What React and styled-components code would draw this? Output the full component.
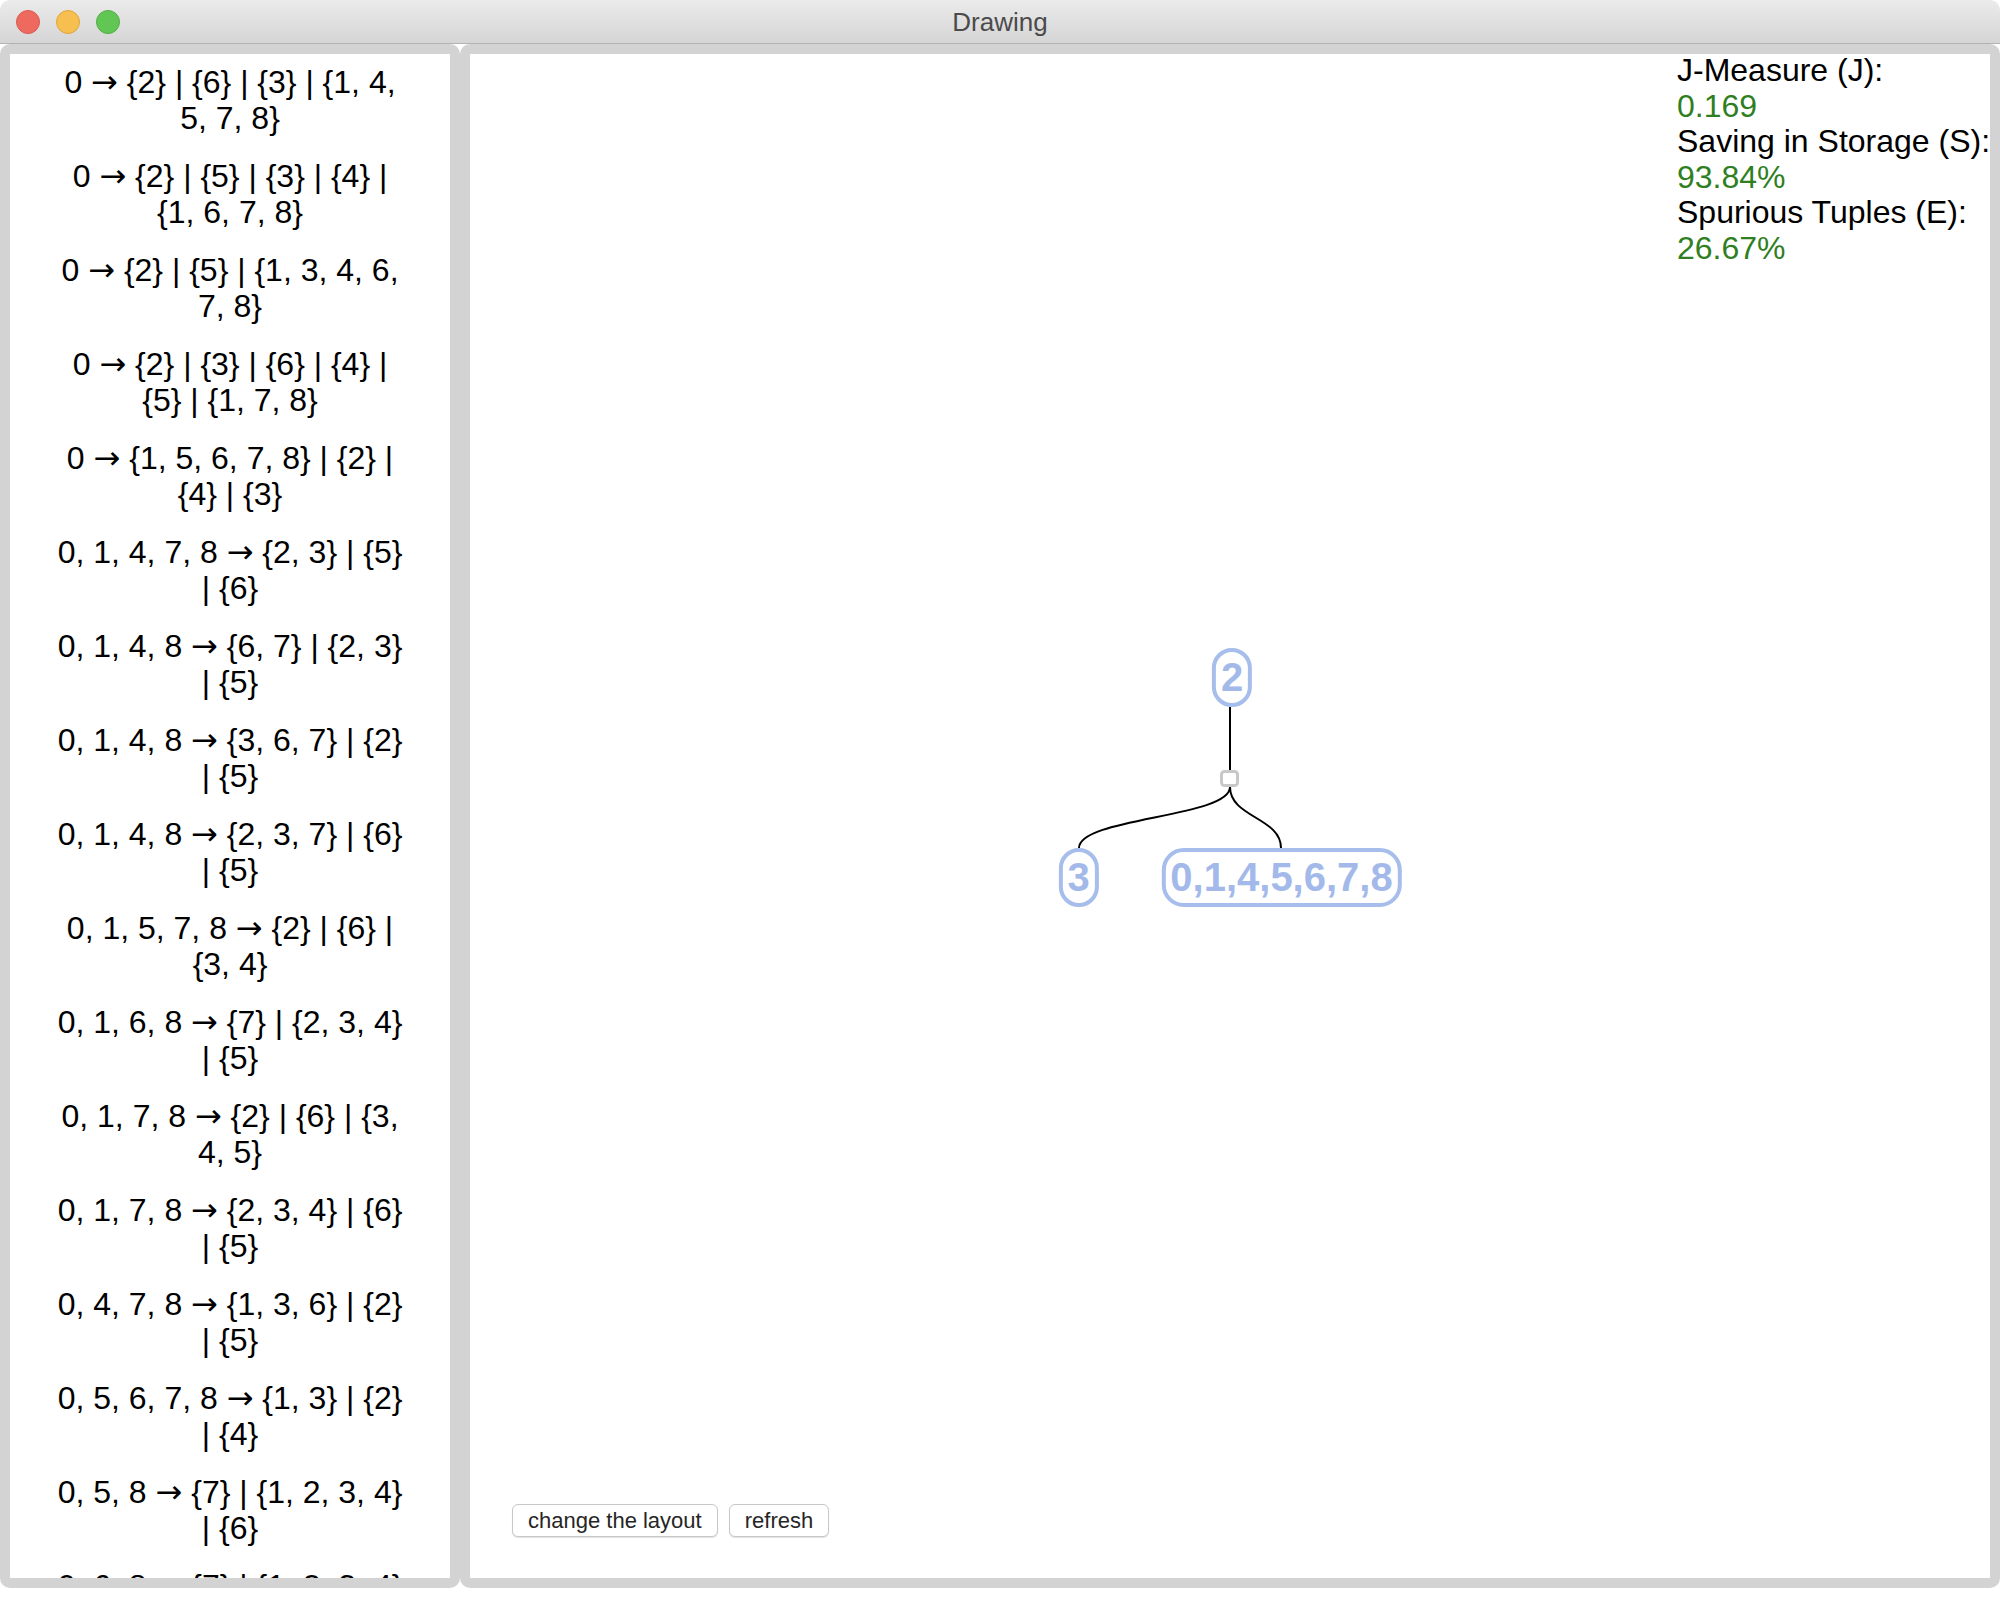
import React from "react";
import styled, { createGlobalStyle } from "styled-components";

const GlobalStyle = createGlobalStyle`
  html, body {
    margin: 0;
    padding: 0;
    background: #ffffff;
  }
  body {
    font-family: "Liberation Sans", Arial, Helvetica, sans-serif;
  }
  * { box-sizing: border-box; }
`;

const Window = styled.div`
  width: 2000px;
  height: 1600px;
  display: flex;
  flex-direction: column;
  background: #ffffff;
`;

const TitleBar = styled.div`
  height: 44px;
  flex: none;
  position: relative;
  display: flex;
  align-items: center;
  justify-content: center;
  background: linear-gradient(#ebebeb, #d5d5d5);
  border-bottom: 1px solid #b3b3b3;
  border-radius: 10px 10px 0 0;
`;

const Lights = styled.div`
  position: absolute;
  left: 16px;
  top: 10px;
  display: flex;
  gap: 16px;
`;

const Light = styled.span`
  width: 24px;
  height: 24px;
  border-radius: 50%;
  background: ${(p) => p.$bg};
  border: 1px solid ${(p) => p.$edge};
`;

const Title = styled.div`
  font-size: 26px;
  color: #4b4b4b;
  line-height: 1;
  margin-top: 1px;
`;

const Main = styled.div`
  height: 1544px;
  flex: none;
  display: flex;
`;

const Panel = styled.div`
  border: 10px solid #d3d3d3;
  border-radius: 10px;
  background: #ffffff;
  overflow: hidden;
  position: relative;
`;

const ListPanel = styled(Panel)`
  width: 460px;
  flex: none;
`;

const RuleList = styled.div`
  height: 100%;
  overflow: hidden;
  padding-top: 10px;
  display: flex;
  flex-direction: column;
  align-items: center;
  gap: 22px;
`;

const Rule = styled.div`
  width: 352px;
  flex: none;
  text-align: center;
  font-size: 32px;
  line-height: 36px;
  color: #000;
`;

const Arrow = styled.span`
  font-family: "DejaVu Sans", sans-serif;
  font-size: 32px;
  line-height: 1;
`;

const DrawPanel = styled(Panel)`
  flex: 1;
  display: flex;
  flex-direction: column;
`;

const Canvas = styled.div`
  flex: 1;
  position: relative;
`;

const Stats = styled.div`
  position: absolute;
  left: 1207px;
  top: -1px;
  font-size: 32px;
  line-height: 35.6px;
  white-space: nowrap;
`;

const StatLabel = styled.div`
  color: #000;
`;

const StatValue = styled.div`
  color: #2f7f22;
`;

const Edges = styled.svg`
  position: absolute;
  left: 0;
  top: 0;
  width: 100%;
  height: 100%;
  overflow: visible;
`;

const Node = styled.div`
  position: absolute;
  transform: translateX(-50%);
  height: 59px;
  padding: 0 5px;
  border: 4px solid #a7bdec;
  border-radius: 22px;
  background: #ffffff;
  color: #a3b9ea;
  font-weight: 700;
  font-size: 40px;
  line-height: 51px;
  white-space: nowrap;
`;

const Toolbar = styled.div`
  flex: none;
  display: flex;
  gap: 11px;
  padding: 0 0 41px 42px;
`;

const Button = styled.button`
  height: 33px;
  padding: 0 15px;
  background: #ffffff;
  border: 1px solid #c8c8c8;
  border-radius: 6px;
  box-shadow: 0 1px 1px rgba(0, 0, 0, 0.12);
  font-family: "Liberation Sans", Arial, sans-serif;
  font-size: 22px;
  color: #262626;
  line-height: 1;
`;

const rules = [
  ["0", "{2} | {6} | {3} | {1, 4, 5, 7, 8}"],
  ["0", "{2} | {5} | {3} | {4} | {1, 6, 7, 8}"],
  ["0", "{2} | {5} | {1, 3, 4, 6, 7, 8}"],
  ["0", "{2} | {3} | {6} | {4} | {5} | {1, 7, 8}"],
  ["0", "{1, 5, 6, 7, 8} | {2} | {4} | {3}"],
  ["0, 1, 4, 7, 8", "{2, 3} | {5} | {6}"],
  ["0, 1, 4, 8", "{6, 7} | {2, 3} | {5}"],
  ["0, 1, 4, 8", "{3, 6, 7} | {2} | {5}"],
  ["0, 1, 4, 8", "{2, 3, 7} | {6} | {5}"],
  ["0, 1, 5, 7, 8", "{2} | {6} | {3, 4}"],
  ["0, 1, 6, 8", "{7} | {2, 3, 4} | {5}"],
  ["0, 1, 7, 8", "{2} | {6} | {3, 4, 5}"],
  ["0, 1, 7, 8", "{2, 3, 4} | {6} | {5}"],
  ["0, 4, 7, 8", "{1, 3, 6} | {2} | {5}"],
  ["0, 5, 6, 7, 8", "{1, 3} | {2} | {4}"],
  ["0, 5, 8", "{7} | {1, 2, 3, 4} | {6}"],
  ["0, 6, 8", "{7} | {1, 2, 3, 4} | {5}"],
];

const stats = [
  ["J-Measure (J):", "0.169"],
  ["Saving in Storage (S):", "93.84%"],
  ["Spurious Tuples (E):", "26.67%"],
];

const nodes = [
  { label: "2", x: 762, y: 594 },
  { label: "3", x: 608.5, y: 794 },
  { label: "0,1,4,5,6,7,8", x: 811.5, y: 794 },
];

export default function App() {
  return (
    <>
      <GlobalStyle />
      <Window>
        <TitleBar>
          <Lights>
            <Light $bg="#ee6a5f" $edge="#d95a4f" />
            <Light $bg="#f6bf4f" $edge="#dea63c" />
            <Light $bg="#62c655" $edge="#4fae43" />
          </Lights>
          <Title>Drawing</Title>
        </TitleBar>
        <Main>
          <ListPanel>
            <RuleList>
              {rules.map(([lhs, rhs], i) => (
                <Rule key={i}>
                  {lhs} <Arrow>→</Arrow> {rhs}
                </Rule>
              ))}
            </RuleList>
          </ListPanel>
          <DrawPanel>
            <Canvas>
              <Edges>
                <path d="M760 653 L760 716" stroke="#000" strokeWidth="2" fill="none" />
                <path d="M760 733 C760 763.5 609 763.5 609 794" stroke="#000" strokeWidth="2" fill="none" />
                <path d="M760 733 C760 763.5 811 763.5 811 794" stroke="#000" strokeWidth="2" fill="none" />
                <rect x="751.5" y="717.5" width="16" height="14" rx="3" fill="#fff" stroke="#c8c8c8" strokeWidth="3" />
              </Edges>
              {nodes.map((n) => (
                <Node key={n.label} style={{ left: n.x, top: n.y }}>
                  {n.label}
                </Node>
              ))}
              <Stats>
                {stats.map(([l, v]) => (
                  <React.Fragment key={l}>
                    <StatLabel>{l}</StatLabel>
                    <StatValue>{v}</StatValue>
                  </React.Fragment>
                ))}
              </Stats>
            </Canvas>
            <Toolbar>
              <Button>change the layout</Button>
              <Button>refresh</Button>
            </Toolbar>
          </DrawPanel>
        </Main>
      </Window>
    </>
  );
}
